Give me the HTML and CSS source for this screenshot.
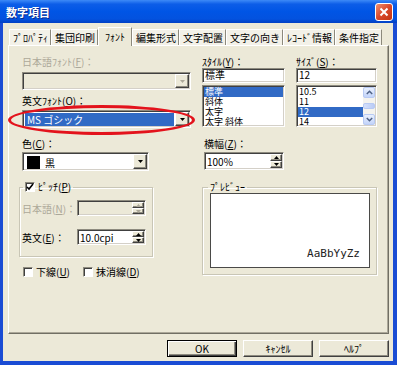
FILE: index.html
```html
<!DOCTYPE html>
<html>
<head>
    <meta charset="utf-8">
    <title>数字項目</title>
    <link rel="stylesheet" href="styles.css">
</head>
<body>
<div class="window">
    <div class="titlebar">
        <span class="title">数字項目</span>
        <span class="close-btn">
            <svg width="10" height="10" viewBox="0 0 10 10"><path d="M1.5 1.5L8.5 8.5M8.5 1.5L1.5 8.5" stroke="#fff" stroke-width="2"/></svg>
        </span>
    </div>

    <div class="client">
        <div class="tabs">
            <span class="tab">ﾌﾟﾛﾊﾟﾃｨ</span>
            <span class="tab">集団印刷</span>
            <span class="tab active">ﾌｫﾝﾄ</span>
            <span class="tab">編集形式</span>
            <span class="tab">文字配置</span>
            <span class="tab">文字の向き</span>
            <span class="tab">ﾚｺｰﾄﾞ情報</span>
            <span class="tab">条件指定</span>
        </div>

        <div class="panel">
            <!-- left column: fonts, colour, pitch -->
            <div class="col">
                <div class="label off">日本語ﾌｫﾝﾄ(<u>F</u>)：</div>
                <div class="combo off" id="jp-font">
                    <span class="combo-text"></span>
                    <span class="drop-btn"><svg width="5" height="3" viewBox="0 0 5 3"><path d="M0 0h5L2.5 3z"/></svg></span>
                </div>

                <div class="label" id="en-font-label">英文ﾌｫﾝﾄ(<u>O</u>)：</div>
                <div class="marked" id="en-font">
                    <div class="combo">
                        <span class="combo-text selected">MS ゴシック</span>
                        <span class="drop-btn"><svg width="5" height="3" viewBox="0 0 5 3"><path d="M0 0h5L2.5 3z"/></svg></span>
                    </div>
                    <div class="red-ring"></div>
                </div>

                <div class="label" id="color-label">色(<u>C</u>)：</div>
                <div class="combo" id="color-combo">
                    <span class="combo-text"><span class="swatch"></span>黒</span>
                    <span class="drop-btn"><svg width="5" height="3" viewBox="0 0 5 3"><path d="M0 0h5L2.5 3z"/></svg></span>
                </div>

                <fieldset class="group" id="pitch">
                    <legend><span class="check on"><svg width="8" height="8" viewBox="0 0 8 8"><path d="M1 4l2 2 4-5" fill="none" stroke="#000" stroke-width="1.6"/></svg></span>ﾋﾟｯﾁ(<u>P</u>)</legend>
                    <div class="spin-row" id="pitch-jp">
                        <span class="spin-label off">日本語(<u>N</u>)：</span>
                        <div class="spin off">
                            <span class="spin-text"></span>
                            <span class="spin-btns">
                                <span class="spin-btn"><svg width="5" height="3" viewBox="0 0 5 3"><path d="M0 3h5L2.5 0z"/></svg></span>
                                <span class="spin-btn"><svg width="5" height="3" viewBox="0 0 5 3"><path d="M0 0h5L2.5 3z"/></svg></span>
                            </span>
                        </div>
                    </div>
                    <div class="spin-row" id="pitch-en">
                        <span class="spin-label">英文(<u>E</u>)：</span>
                        <div class="spin">
                            <span class="spin-text">10.0cpi</span>
                            <span class="spin-btns">
                                <span class="spin-btn"><svg width="5" height="3" viewBox="0 0 5 3"><path d="M0 3h5L2.5 0z"/></svg></span>
                                <span class="spin-btn"><svg width="5" height="3" viewBox="0 0 5 3"><path d="M0 0h5L2.5 3z"/></svg></span>
                            </span>
                        </div>
                    </div>
                </fieldset>

                <div class="checks">
                    <span class="check-item"><span class="check"></span>下線(<u>U</u>)</span>
                    <span class="check-item"><span class="check"></span>抹消線(<u>D</u>)</span>
                </div>
            </div>

            <!-- right column: style, size, width, preview -->
            <div class="col">
                <div class="pickers">
                    <div class="picker">
                        <div class="label">ｽﾀｲﾙ(<u>Y</u>)：</div>
                        <div class="field">標準</div>
                        <div class="listbox">
                            <div class="items">
                                <div class="item selected">標準</div>
                                <div class="item">斜体</div>
                                <div class="item">太字</div>
                                <div class="item">太字 斜体</div>
                            </div>
                        </div>
                    </div>
                    <div class="picker">
                        <div class="label">ｻｲｽﾞ(<u>S</u>)：</div>
                        <div class="field">12</div>
                        <div class="listbox">
                            <div class="items">
                                <div class="item">10.5</div>
                                <div class="item">11</div>
                                <div class="item selected">12</div>
                                <div class="item">14</div>
                            </div>
                            <div class="scrollbar">
                                <span class="sb-btn"><svg width="7" height="5" viewBox="0 0 7 5"><path d="M0.8 4L3.5 1.3 6.2 4" fill="none" stroke="#4D6185" stroke-width="1.5"/></svg></span>
                                <span class="sb-track"><span class="sb-thumb"></span></span>
                                <span class="sb-btn"><svg width="7" height="5" viewBox="0 0 7 5"><path d="M0.8 1L3.5 3.7 6.2 1" fill="none" stroke="#4D6185" stroke-width="1.5"/></svg></span>
                            </div>
                        </div>
                    </div>
                </div>

                <div id="width-block">
                    <div class="label">横幅(<u>Z</u>)：</div>
                    <div class="spin" id="width-spin">
                        <span class="spin-text">100%</span>
                        <span class="spin-btns">
                            <span class="spin-btn"><svg width="5" height="3" viewBox="0 0 5 3"><path d="M0 3h5L2.5 0z"/></svg></span>
                            <span class="spin-btn"><svg width="5" height="3" viewBox="0 0 5 3"><path d="M0 0h5L2.5 3z"/></svg></span>
                        </span>
                    </div>
                </div>

                <fieldset class="group" id="preview">
                    <legend>ﾌﾟﾚﾋﾞｭｰ</legend>
                    <div class="preview-box"><span class="sample">AaBbYyZz</span></div>
                </fieldset>
            </div>
        </div>

        <div class="buttons">
            <span class="btn default">OK</span>
            <span class="btn">ｷｬﾝｾﾙ</span>
            <span class="btn">ﾍﾙﾌﾟ</span>
        </div>
    </div>
</div>
</body>
</html>
```

FILE: styles.css
```css
* {
    box-sizing: border-box;
}
body {
    margin: 0;
    font-family: "Noto Sans CJK JP", sans-serif;
    font-size: 10px;
    color: #000;
}
u {
    text-underline-offset: 1px;
}
.off {
    color: #ACA899;
}

/* window frame */
.window {
    width: 397px;
    height: 365px;
    background: #1A4CD4;
    display: flex;
    flex-direction: column;
}
.titlebar {
    flex: none;
    height: 23px;
    display: flex;
    align-items: center;
    justify-content: space-between;
    padding: 0 4px 0 6px;
    background: linear-gradient(#3D8AF7, #0C5DE8 18%, #0055E5 50%, #0352DF 82%, #0241C4);
}
.title {
    color: #fff;
    font-weight: bold;
    font-size: 11px;
    text-shadow: 1px 1px 0 #0A2A8E;
}
.close-btn {
    width: 18px;
    height: 18px;
    border: 1px solid #fff;
    border-radius: 3px;
    background: linear-gradient(135deg, #F09070, #D9482B 50%, #C23513);
    display: flex;
    align-items: center;
    justify-content: center;
}
.client {
    flex: 1;
    margin: 0 4px 4px 3px;
    padding-top: 4px;
    background: #ECE9D8;
    display: flex;
    flex-direction: column;
}

/* tabs */
.tabs {
    display: flex;
    align-items: flex-end;
    height: 18px;
    margin-left: 6px;
}
.tab {
    height: 16px;
    line-height: 15px;
    padding: 0 2px 0 3px;
    border: 1px solid;
    border-color: #fff #8C897C transparent #fff;
    border-bottom: 0;
    background: #F3F1E8;
    white-space: nowrap;
}
.tab.active {
    height: 19px;
    margin-bottom: -1px;
    padding: 0 6px;
    line-height: 17px;
    background: #ECE9D8;
    position: relative;
    z-index: 1;
}
.panel {
    width: 381px;
    height: 289px;
    margin-left: 5px;
    padding: 10px 11px 0 13px;
    border: 1px solid;
    border-color: #fff #716F64 #716F64 #fff;
    box-shadow: inset -1px -1px 0 #ACA899;
    display: grid;
    grid-template-columns: 169px 175px;
    column-gap: 11px;
    align-items: start;
}
.col {
    display: flex;
    flex-direction: column;
}
.label {
    height: 12px;
    line-height: 12px;
    white-space: nowrap;
}

/* sunken controls */
.combo, .field, .listbox, .spin {
    border: 1px solid;
    border-color: #8E8B7F #fff #fff #8E8B7F;
    box-shadow: inset 1px 1px 0 #404040, inset -1px -1px 0 #D4D0C8;
    background: #fff;
}
.combo {
    height: 18px;
    display: flex;
    padding: 1px;
}
.combo.off {
    background: #ECE9D8;
}
.combo-text {
    flex: 1;
    margin: 1px 1px 0 1px;
    padding-left: 2px;
    display: flex;
    align-items: center;
    white-space: nowrap;
}
.combo-text.selected {
    background: #316AC5;
    color: #fff;
}
.drop-btn, .spin-btn {
    background: #ECE9D8;
    border: 1px solid;
    border-color: #fff #404040 #404040 #fff;
    box-shadow: inset -1px -1px 0 #8E8B7F;
    display: flex;
    align-items: center;
    justify-content: center;
}
.drop-btn {
    width: 14px;
}
.off .drop-btn, .spin.off .spin-btn {
    fill: #ACA899;
}
#jp-font {
    margin-top: 4px;
}
#en-font-label {
    margin-top: 5px;
}
.marked {
    margin-top: 3px;
    position: relative;
}
.red-ring {
    position: absolute;
    left: -14px;
    top: -5px;
    width: 187px;
    height: 30px;
    border: 3px solid #E3131C;
    border-radius: 50%;
}
#color-label {
    margin-top: 10px;
}
#color-combo {
    margin-top: 2px;
    width: 127px;
    height: 19px;
}
.swatch {
    width: 13px;
    height: 13px;
    background: #000;
    margin-right: 5px;
}

/* group boxes */
.group {
    margin: 0;
    border: 1px solid #C9C6B6;
    box-shadow: inset 1px 1px 0 #fff, 1px 1px 0 #fff;
}
.group legend {
    line-height: 12px;
    height: 12px;
    display: flex;
    align-items: center;
}
#pitch {
    margin: 10px 0 0 -3px;
    width: 134px;
    padding: 0 0 11px 2px;
}
#pitch legend {
    margin-left: 1px;
    padding: 0 2px;
}
.check {
    width: 10px;
    height: 10px;
    border: 1px solid;
    border-color: #8E8B7F #fff #fff #8E8B7F;
    box-shadow: inset 1px 1px 0 #404040;
    background: #fff;
    margin-right: 3px;
    display: flex;
    align-items: center;
    justify-content: center;
}
.spin-row {
    display: flex;
    align-items: center;
}
#pitch-jp {
    margin-top: 7px;
}
#pitch-en {
    margin-top: 13px;
}
.spin-label {
    width: 55px;
    white-space: nowrap;
}
.spin {
    display: flex;
    width: 69px;
    height: 16px;
    padding: 1px;
}
.spin.off {
    background: #ECE9D8;
}
.spin-text {
    flex: 1;
    padding-left: 1px;
    line-height: 13px;
}
.spin-btns {
    width: 12px;
    display: flex;
    flex-direction: column;
}
.spin-btn {
    flex: 1;
}
.checks {
    margin-top: 9px;
    display: grid;
    grid-template-columns: 60px auto;
    padding-left: 1px;
}
.check-item {
    display: flex;
    align-items: center;
    line-height: 12px;
}

/* style / size pickers */
.pickers {
    display: grid;
    grid-template-columns: 83px 81px;
    column-gap: 11px;
}
.field {
    height: 15px;
    line-height: 12px;
    padding-left: 2px;
}
.listbox {
    margin-top: 2px;
    height: 42px;
    display: flex;
    padding: 1px;
}
.items {
    flex: 1;
}
.item {
    height: 10px;
    line-height: 10px;
    font-size: 9px;
    padding-left: 1px;
    white-space: nowrap;
}
.item.selected {
    background: #316AC5;
    color: #fff;
}
.scrollbar {
    width: 12px;
    display: flex;
    flex-direction: column;
    background: #F4F3EE;
}
.sb-btn {
    height: 11px;
    border: 1px solid #B8CAF3;
    border-radius: 2px;
    background: linear-gradient(#E9F0FD, #C3D4FA);
    display: flex;
    align-items: center;
    justify-content: center;
}
.sb-track {
    flex: 1;
    display: flex;
    align-items: center;
}
.sb-thumb {
    width: 100%;
    height: 6px;
    border: 1px solid #B8CAF3;
    border-radius: 2px;
    background: linear-gradient(90deg, #D4E0FB, #BACBF6);
}
#width-block {
    margin: 11px 0 0 2px;
}
#width-spin {
    margin-top: 2px;
    width: 80px;
    height: 18px;
}
#width-spin .spin-text {
    line-height: 15px;
}
#preview {
    margin-top: 11px;
    width: 175px;
    padding: 0 6px 6px 7px;
}
#preview legend {
    margin-left: -2px;
    padding: 0 2px;
}
.preview-box {
    height: 75px;
    border: 1px solid #4A4A48;
    background: #fff;
    display: flex;
    justify-content: flex-end;
    align-items: flex-end;
    padding: 0 9px 7px 0;
}
.sample {
    font-family: "DejaVu Sans Mono", monospace;
    font-size: 11px;
    color: #222;
}

/* dialog buttons */
.buttons {
    margin-top: 6px;
    padding-right: 4px;
    display: flex;
    justify-content: flex-end;
    gap: 6px;
}
.btn {
    width: 70px;
    height: 17px;
    border: 1px solid;
    border-color: #fff #404040 #404040 #fff;
    box-shadow: inset -1px -1px 0 #8E8B7F;
    background: #ECE9D8;
    display: flex;
    align-items: center;
    justify-content: center;
}
.btn.default {
    border-color: #000;
    box-shadow: inset 1px 1px 0 #fff, inset -1px -1px 0 #404040, inset -2px -2px 0 #8E8B7F;
}
```
